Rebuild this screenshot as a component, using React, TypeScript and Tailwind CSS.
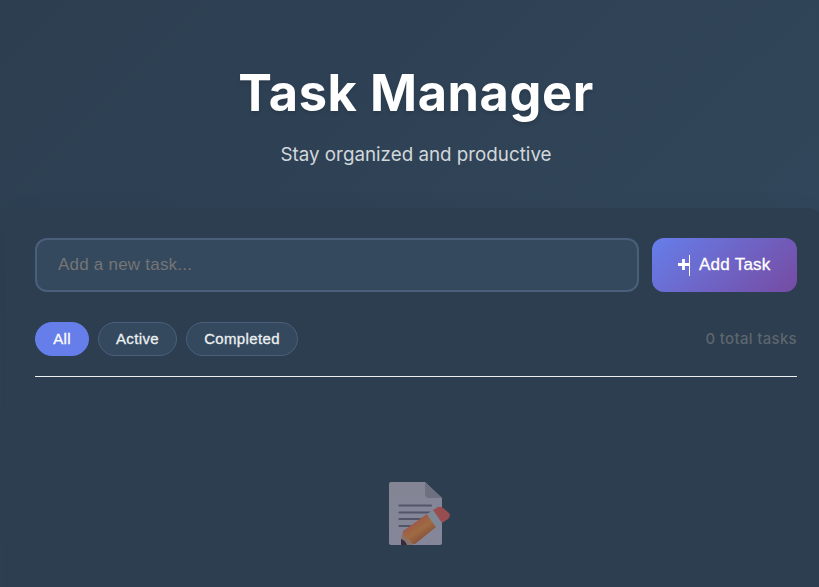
import React from "react";

const filters = [
  { label: "All", className: "w-[54px] border-[#667eea] bg-[#667eea] text-white" },
  { label: "Active", className: "w-[79px] border-[#4a5f7a] bg-[#34495e] text-[#ecf0f1]" },
  { label: "Completed", className: "w-[112px] border-[#4a5f7a] bg-[#34495e] text-[#ecf0f1]" },
];

function MemoIcon() {
  return (
    <svg className="h-[65px] w-[62px] opacity-60" viewBox="0 0 62 65" fill="none">
      <defs>
        <linearGradient id="paper" x1="0" y1="0" x2="0" y2="1">
          <stop stopColor="#bdb5c2" />
          <stop offset="1" stopColor="#c0b7cc" />
        </linearGradient>
        <linearGradient id="wood" x1="27" y1="40" x2="38" y2="56" gradientUnits="userSpaceOnUse">
          <stop stopColor="#e96a45" />
          <stop offset="0.5" stopColor="#ec8a3a" />
          <stop offset="1" stopColor="#c8602e" />
        </linearGradient>
      </defs>
      <path d="M3 1H37L54 17V62Q54 64 52 64H3Q1 64 1 62V3Q1 1 3 1Z" fill="url(#paper)" />
      <path d="M37 1V13Q37 17 41 17H54Z" fill="#9b91a3" />
      <path d="M11.5 24.5H43M11.5 31.5H43M11.5 38H34M11.5 45H29" stroke="#6c6378" strokeWidth="2.2" strokeLinecap="round" />
      <path d="M13 64L13 57L16 49L28 62L24 64Z" fill="#c7947f" />
      <path d="M13 64L13 58Q17 59 19 64Z" fill="#421c35" />
      <path d="M15 50L39 33L48 46L27 63Q23 63 22 59Q17 58 15 54Z" fill="url(#wood)" />
      <path d="M39 33L45 29L54 42L48 46Z" fill="#b3bac8" />
      <path d="M45 29L50 26Q53 25 55 27L61 32Q63 35 60 38L54 42Z" fill="#e05a50" />
    </svg>
  );
}

export default function App() {
  return (
    <main className="h-[587px] w-full overflow-hidden bg-linear-[135deg,#2c3e50_0%,#34495e_100%] font-['Inter',sans-serif]">
      <div className="ml-[5px] w-[822px]">
        <header className="flex h-[208px] flex-col items-center pt-[62px] text-center">
          <h1 className="text-[50.5px] leading-[61px] font-bold tracking-[.6px] text-white [text-shadow:0_2px_4px_rgba(0,0,0,.15)]">Task Manager</h1>
          <p className="mt-[18px] text-[18.8px] leading-7 text-[#d2d8dc]">Stay organized and productive</p>
        </header>
        <section className="h-[600px] rounded-[20px] bg-[#2c3e50] px-[30px] pt-[30px] font-['Liberation_Sans',Arial,sans-serif] shadow-[0_20px_40px_rgba(0,0,0,.1)]">
          <div className="flex gap-[13px]">
            <input
              className="h-[54px] w-[604px] rounded-xl border-2 border-[#4a5f7a] bg-[#34495e] px-[21px] text-[17px] tracking-[.22px] text-[#ecf0f1] outline-none placeholder:text-[#757575]"
              placeholder="Add a new task..."
            />
            <button className="flex h-[54px] w-[145px] items-center rounded-xl bg-linear-[135deg,#667eea_0%,#764ba2_100%] pl-[26px] text-white">
              <svg className="h-[21px] w-[13px]" viewBox="0 0 13 21" fill="none" stroke="white">
                <path d="M0 9.5H11M5.5 4V15" strokeWidth="2.8" />
                <path d="M11.5 0V21" />
              </svg>
              <span className="ml-2 text-[17px] tracking-[.25px] [-webkit-text-stroke:.3px_white]">Add Task</span>
            </button>
          </div>
          <div className="mt-[30px] flex h-[55px] items-start justify-between border-b border-[#ecf0f1]">
            <div className="flex gap-[9px]">
              {filters.map((filter) => (
                <button key={filter.label} className={`h-[34px] rounded-full border text-[15px] tracking-[.35px] [-webkit-text-stroke:.3px_currentColor] ${filter.className}`}>
                  {filter.label}
                </button>
              ))}
            </div>
            <span className="font-['Inter',sans-serif] text-[15px] leading-[34px] font-medium tracking-[.32px] text-[#5d666d]">0 total tasks</span>
          </div>
          <div className="mt-[104px] ml-[353px]">
            <MemoIcon />
          </div>
        </section>
      </div>
    </main>
  );
}
